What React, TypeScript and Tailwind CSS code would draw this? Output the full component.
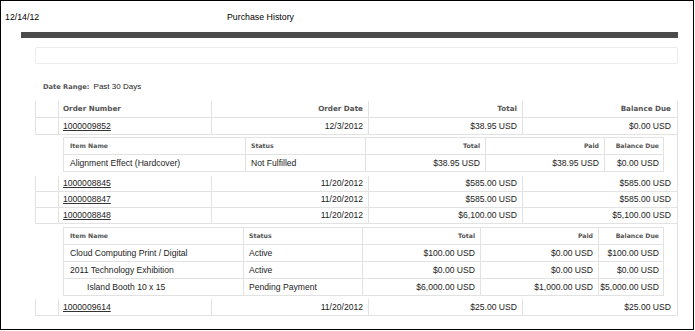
import React from 'react'

interface OrderRow {
  number: string
  date: string
  total: string
  balance: string
}

interface ItemRow {
  name: string
  status: string
  total: string
  paid: string
  balance: string
  indent?: boolean
}

const body = "font-['Liberation_Sans',Arial,sans-serif] text-[8.6px] text-[#1c1c1c]"
const head = "font-['DejaVu_Sans',Verdana,sans-serif] font-bold text-[#555]"

function MainRow({ order, h = 'h-[17px]' }: { order: OrderRow; h?: string }) {
  return (
    <div className={`grid grid-cols-[24px_153px_157px_154px_155px] ${h} ${body}`}>
      <div className="border-x border-b border-[#e2e2e2]" />
      <div className="flex items-center border-r border-b border-[#e2e2e2] pl-[4px]">
        <span className="underline decoration-[#333] underline-offset-[1px]">{order.number}</span>
      </div>
      <div className="flex items-center justify-end border-r border-b border-[#e2e2e2] pr-[5px]">{order.date}</div>
      <div className="flex items-center justify-end border-r border-b border-[#e2e2e2] pr-[5px]">{order.total}</div>
      <div className="flex items-center justify-end border-r border-b border-[#e2e2e2] pr-[6px]">{order.balance}</div>
    </div>
  )
}

function ItemsTable({ cols, items }: { cols: string; items: ItemRow[] }) {
  const cell = 'flex items-center border-r border-b border-[#e2e2e2]'
  return (
    <div className="ml-[28px] w-[601px] border-t border-[#e2e2e2]">
      <div className={`grid ${cols} h-[17px] ${head} text-[6.2px]`}>
        <div className={`${cell} border-l pl-[6px]`}>Item Name</div>
        <div className={`${cell} pl-[5px]`}>Status</div>
        <div className={`${cell} justify-end pr-[5px]`}>Total</div>
        <div className={`${cell} justify-end pr-[5px]`}>Paid</div>
        <div className={`${cell} justify-end pr-[4px]`}>Balance Due</div>
      </div>
      {items.map((it) => (
        <div key={it.name} className={`grid ${cols} h-[17px] ${body}`}>
          <div className={`${cell} border-l ${it.indent ? 'pl-[23px]' : 'pl-[6px]'}`}>{it.name}</div>
          <div className={`${cell} pl-[5px]`}>{it.status}</div>
          <div className={`${cell} justify-end pr-[5px]`}>{it.total}</div>
          <div className={`${cell} justify-end pr-[5px]`}>{it.paid}</div>
          <div className={`${cell} justify-end pr-[4px]`}>{it.balance}</div>
        </div>
      ))}
    </div>
  )
}

export default function App() {
  return (
    <div className="h-[330px] w-[694px] border border-black bg-white">
      <div className={`flex h-[12px] items-center mt-[11px] ${body} text-[8.8px] text-black`}>
        <span className="w-[226px] pl-[4px]">12/14/12</span>
        <span>Purchase History</span>
      </div>
      <div className="ml-[20px] mt-[8px] h-[6px] w-[657px] bg-[#4b4b4b]" />
      <div className="ml-[34px] mt-[9px] h-[17px] w-[643px] rounded-[2px] border border-[#ececec]" />

      <div className="ml-[42px] mt-[17px] flex h-[12px] items-center">
        <span className={`${head} text-[6.7px] text-[#333]`}>Date Range:</span>
        <span className={`${body} ml-[4px] text-[8px]`}>Past 30 Days</span>
      </div>

      <div className="ml-[34px] mt-[8px] w-[643px]">
        <div className={`grid h-[17px] grid-cols-[24px_153px_157px_154px_155px] ${head} text-[7.2px]`}>
          <div className="border-x border-b border-[#e2e2e2]" />
          <div className="flex items-center border-r border-b border-[#e2e2e2] pl-[4px]">Order Number</div>
          <div className="flex items-center justify-end border-r border-b border-[#e2e2e2] pr-[5px]">Order Date</div>
          <div className="flex items-center justify-end border-r border-b border-[#e2e2e2] pr-[5px]">Total</div>
          <div className="flex items-center justify-end border-r border-b border-[#e2e2e2] pr-[6px]">Balance Due</div>
        </div>

        <MainRow order={{ number: '1000009852', date: '12/3/2012', total: '$38.95 USD', balance: '$0.00 USD' }} />
        <div className="border-r border-[#e2e2e2] pt-[2px] pb-[4px]">
          <ItemsTable
            cols="grid-cols-[183px_120px_120px_119px_59px]"
            items={[
              { name: 'Alignment Effect (Hardcover)', status: 'Not Fulfilled', total: '$38.95 USD', paid: '$38.95 USD', balance: '$0.00 USD' },
            ]}
          />
        </div>

        <MainRow h="h-[16px]" order={{ number: '1000008845', date: '11/20/2012', total: '$585.00 USD', balance: '$585.00 USD' }} />
        <MainRow h="h-[16px]" order={{ number: '1000008847', date: '11/20/2012', total: '$585.00 USD', balance: '$585.00 USD' }} />
        <MainRow h="h-[16px]" order={{ number: '1000008848', date: '11/20/2012', total: '$6,100.00 USD', balance: '$5,100.00 USD' }} />
        <div className="border-r border-[#e2e2e2] pt-[3px] pb-[3px]">
          <ItemsTable
            cols="grid-cols-[181px_119px_118px_118px_65px]"
            items={[
              { name: 'Cloud Computing Print / Digital', status: 'Active', total: '$100.00 USD', paid: '$0.00 USD', balance: '$100.00 USD' },
              { name: '2011 Technology Exhibition', status: 'Active', total: '$0.00 USD', paid: '$0.00 USD', balance: '$0.00 USD' },
              { name: 'Island Booth 10 x 15', status: 'Pending Payment', total: '$6,000.00 USD', paid: '$1,000.00 USD', balance: '$5,000.00 USD', indent: true },
            ]}
          />
        </div>
        <MainRow order={{ number: '1000009614', date: '11/20/2012', total: '$25.00 USD', balance: '$25.00 USD' }} />
      </div>
    </div>
  )
}
